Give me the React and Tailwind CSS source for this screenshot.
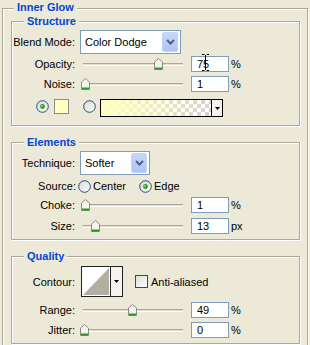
import React from 'react';

const etched = 'border-[#ACA899] shadow-[1px_1px_0_#fff,inset_1px_1px_0_#fff]';

function Group({ title, className = '', children }) {
  return (
    <div className={`relative w-[289px] border ${etched} ${className}`}>
      <span className="absolute -top-[8px] left-[12px] bg-[#ECE9D8] px-[3px] font-bold text-[#0046D5]">
        {title}
      </span>
      {children}
    </div>
  );
}

function Chevron() {
  return (
    <svg width="9" height="6" viewBox="0 0 9 6">
      <path d="M1 1 L4.5 4.5 L8 1" fill="none" stroke="#4D6185" strokeWidth="2" />
    </svg>
  );
}

function Select({ value, width }) {
  return (
    <div className={`flex h-[24px] items-center border border-[#7F9DB9] bg-white pl-[4px] pr-[2px] ${width}`}>
      <span className="flex-1">{value}</span>
      <span className="flex h-[20px] w-[16px] items-center justify-center rounded-[2px] border border-[#C3D3FD] bg-gradient-to-b from-[#C8D6FA] to-[#AFC3F3]">
        <Chevron />
      </span>
    </div>
  );
}

function Thumb({ left }) {
  return (
    <svg className="absolute top-[2px]" style={{ left }} width="9" height="12" viewBox="0 0 9 12">
      <path d="M4.5 0.5 L8.5 4 V11.5 H0.5 V4 Z" fill="#F4F3EE" stroke="#8C8B80" />
      <rect x="1" y="9.5" width="7" height="2" fill="#21A121" />
    </svg>
  );
}

function Slider({ thumb }) {
  return (
    <div className="relative h-[16px] w-[106px]">
      <div className="absolute left-[3px] top-[7px] h-[3px] w-[100px] border-t border-[#ACA899] border-b border-b-white bg-[#E2DFD0]" />
      <Thumb left={thumb} />
    </div>
  );
}

function Cursor() {
  return (
    <svg className="absolute left-[10px] -top-[3px]" width="7" height="17" viewBox="0 0 7 17">
      <path d="M0 0.5 H2.5 M4.5 0.5 H7 M3.5 1 V16 M0 16.5 H2.5 M4.5 16.5 H7" stroke="#000" fill="none" />
    </svg>
  );
}

function SliderRow({ label, value, unit, thumb, className = '', cursor }) {
  return (
    <div className={`flex h-[16px] items-center ${className}`}>
      <span className="w-[63px] text-right">{label}</span>
      <div className="ml-[5px]">
        <Slider thumb={thumb} />
      </div>
      <div className="relative ml-[5px] flex h-[16px] w-[38px] items-center border border-[#7F9DB9] bg-white pl-[5px]">
        {value}
        {cursor && <Cursor />}
      </div>
      <span className="ml-[2px]">{unit}</span>
    </div>
  );
}

function Radio({ checked }) {
  return (
    <svg width="13" height="13" viewBox="0 0 13 13">
      <defs>
        <linearGradient id="rg" x1="0" y1="0" x2="1" y2="1">
          <stop offset="0" stopColor="#D8D7CF" />
          <stop offset="1" stopColor="#FFFFFF" />
        </linearGradient>
      </defs>
      <circle cx="6.5" cy="6.5" r="5.8" fill="url(#rg)" stroke="#1C5180" />
      {checked && <circle cx="6.5" cy="6.5" r="2.4" fill="#21A121" />}
      {checked && <circle cx="6" cy="6" r="0.9" fill="#8FE38F" />}
    </svg>
  );
}

function DownArrow() {
  return (
    <svg width="5" height="3" viewBox="0 0 5 3">
      <path d="M0 0 H5 L2.5 3 Z" fill="#000" />
    </svg>
  );
}

export default function App() {
  return (
    <div className="h-[345px] w-[310px] overflow-hidden bg-[#ECE9D8] font-[Liberation_Sans,Arial,sans-serif] text-[11px] leading-[14px] text-black">
      <div className={`relative ml-[2px] mt-[8px] h-[400px] w-[306px] border ${etched} pl-[8px] pt-[12px]`}>
        <span className="absolute -top-[9px] left-[11px] bg-[#ECE9D8] px-[3px] font-bold text-[#0046D5]">
          Inner Glow
        </span>

        <Group title="Structure" className="pt-[8px] pb-[8px]">
          <div className="flex h-[24px] items-center">
            <span className="w-[63px] text-right">Blend Mode:</span>
            <div className="ml-[5px]">
              <Select value="Color Dodge" width="w-[101px]" />
            </div>
          </div>
          <SliderRow label="Opacity:" value="75" unit="%" thumb={74} className="mt-[2px]" cursor />
          <SliderRow label="Noise:" value="1" unit="%" thumb={1} className="mt-[4px]" />
          <div className="mt-[7px] flex h-[18px] items-start">
            <div className="ml-[24px] mt-[1px] flex">
              <Radio checked />
            </div>
            <div className="ml-[5px] h-[15px] w-[15px] border border-[#8E8D84] bg-[#FFFFC4]" />
            <div className="ml-[14px] mt-[1px] flex">
              <Radio />
            </div>
            <div className="ml-[4px] flex h-[18px] w-[123px] border border-black">
              <div className="flex-1 bg-[conic-gradient(#D4D4D4_25%,#FFFFFF_0_50%,#D4D4D4_0_75%,#FFFFFF_0)] bg-[length:8px_8px]">
                <div className="h-full w-full bg-gradient-to-r from-[#FFFFC0] via-[#FFFFC0]/50 to-transparent" />
              </div>
              <div className="flex w-[11px] items-center justify-center border-l border-black bg-[#F4F3EE]">
                <DownArrow />
              </div>
            </div>
          </div>
        </Group>

        <Group title="Elements" className="mt-[16px] pt-[8px] pb-[5px]">
          <div className="flex h-[24px] items-center">
            <span className="w-[63px] text-right">Technique:</span>
            <div className="ml-[5px]">
              <Select value="Softer" width="w-[70px]" />
            </div>
          </div>
          <div className="mt-[3px] flex h-[16px] items-center">
            <span className="w-[64px] text-right">Source:</span>
            <div className="ml-[2px] flex">
              <Radio />
            </div>
            <span className="ml-[2px] w-[46px]">Center</span>
            <div className="flex">
              <Radio checked />
            </div>
            <span className="ml-[2px]">Edge</span>
          </div>
          <SliderRow label="Choke:" value="1" unit="%" thumb={1} className="mt-[3px]" />
          <SliderRow label="Size:" value="13" unit="px" thumb={11} className="mt-[5px]" />
        </Group>

        <Group title="Quality" className="mt-[16px] pt-[9px] pb-[5px]">
          <div className="flex h-[31px] items-center">
            <span className="w-[63px] text-right">Contour:</span>
            <div className="ml-[6px] flex h-[31px] w-[42px] border border-[#222]">
              <div className="w-[28px] bg-white p-[1px]">
                <svg width="26" height="27" viewBox="0 0 26 27">
                  <path d="M0 27 L26 0 V27 Z" fill="#B3AEA2" />
                </svg>
              </div>
              <div className="flex flex-1 items-center justify-center border-l border-[#222] bg-[#F4F3EE]">
                <DownArrow />
              </div>
            </div>
            <div className="ml-[12px] h-[13px] w-[13px] border border-[#1C5180] bg-gradient-to-br from-[#DCDCD7] to-white" />
            <span className="ml-[3px]">Anti-aliased</span>
          </div>
          <SliderRow label="Range:" value="49" unit="%" thumb={48} className="mt-[5px]" />
          <SliderRow label="Jitter:" value="0" unit="%" thumb={0} className="mt-[4px]" />
        </Group>
      </div>
    </div>
  );
}
